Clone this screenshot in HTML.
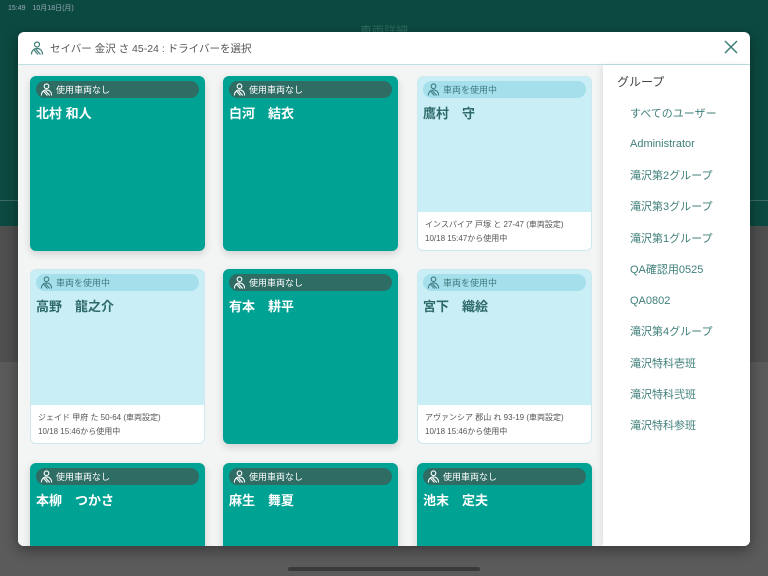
<!DOCTYPE html>
<html><head><meta charset="utf-8"><style>
*{box-sizing:border-box;margin:0;padding:0}
html,body{width:768px;height:576px;overflow:hidden}
body{position:relative;font-family:"Liberation Sans","Noto Sans CJK JP",sans-serif;background:#5b5b5b}
.bgtop{position:absolute;left:0;top:0;width:768px;height:226px;background:#0c4a41}
.bgline{position:absolute;left:0;top:200px;width:768px;height:1px;background:#3d6d66}
.map{position:absolute;left:0;top:226px;width:768px;height:136px;background:#4f4f4f}
.st{position:absolute;left:8px;top:3px;font-size:7px;color:#9ab}
.ttl{position:absolute;left:360px;top:22px;font-size:12px;color:#2f6b62}
.home{position:absolute;left:288px;top:567px;width:192px;height:4px;border-radius:2px;background:#3a3a3a}
.modal{position:absolute;left:18px;top:32px;width:732px;height:514px;background:#fff;border-radius:6px;overflow:hidden;box-shadow:0 4px 14px rgba(0,0,0,.4)}
.hdr{height:33px;border-bottom:1px solid #bfe0e0;display:flex;align-items:center;padding-left:12px;font-size:10.5px;color:#555}
.hdr svg{margin-right:6px}
.x{position:absolute;right:12px;top:8px}
.left{position:absolute;left:0;top:33px;width:585px;height:481px;background:#f3f4f4;overflow:hidden}
.side{position:absolute;left:585px;top:33px;width:147px;height:481px;background:#fff;box-shadow:-2px 0 6px rgba(0,0,0,.08)}
.side h3{font-weight:normal;font-size:12px;line-height:16px;color:#444;position:absolute;left:14px;top:9px}
.side div{position:absolute;left:27px;font-size:11px;line-height:14px;height:14px;color:#3f7f7a;white-space:nowrap}
.card{position:absolute;width:175px;height:175px;border-radius:6px;overflow:hidden}
.t{background:#00a294;box-shadow:0 3px 8px rgba(0,0,0,.15)}
.l{background:#c9eef6;border:1px solid #cde9ee}
.pill{position:absolute;left:6px;top:5px;right:6px;height:17px;border-radius:9px;display:flex;align-items:center;padding-left:4px;font-size:9px}
.l .pill{left:5px;top:4px;right:5px}
.t .pill{background:#2e6c64;color:#fff}
.l .pill{background:#a5dfec;color:#3d7c80}
.pill svg{margin-right:3px}
.nm{position:absolute;left:6px;top:30px;font-size:13px;font-weight:bold;line-height:16px}
.l .nm{left:5px;top:29px}
.t .nm{color:#fff}.l .nm{color:#2f6a6a}
.ft{position:absolute;left:0;bottom:0;width:100%;height:38px;background:#fff;padding:6px 0 0 7px;font-size:8px;color:#555;line-height:14px}
</style></head><body>
<div class="bgtop"></div><div class="bgline"></div><div class="map"></div>
<div class="st">15:49　10月18日(月)</div>
<div class="ttl">車両詳細</div>
<div class="home"></div>
<div class="modal">
 <div class="hdr"><svg width="14" height="14" viewBox="0 0 14 14" fill="none" stroke="#3d7d78" stroke-width="1.2"><circle cx="7" cy="3.5" r="2.5"/><path d="M1.5 13.5c0-4 2.5-6 5.5-6s5.5 2 5.5 6M4 9l4 4.5M6 8.5l4.5 5"/></svg>セイバー 金沢 さ 45-24 : ドライバーを選択</div>
 <svg class="x" width="14" height="14" viewBox="0 0 14 14" stroke="#3d7d78" stroke-width="1.5"><path d="M1 1L13 13M13 1L1 13"/></svg>
 <div class="left">
  <div class="card t" style="left:12px;top:11px"><div class="pill">ICON使用車両なし</div><div class="nm">北村 和人</div></div>
  <div class="card t" style="left:205px;top:11px"><div class="pill">ICON使用車両なし</div><div class="nm">白河　結衣</div></div>
  <div class="card l" style="left:399px;top:11px"><div class="pill">ICON車両を使用中</div><div class="nm">鷹村　守</div><div class="ft">インスパイア 戸塚 と 27-47 (車両設定)<br>10/18 15:47から使用中</div></div>
  <div class="card l" style="left:12px;top:204px"><div class="pill">ICON車両を使用中</div><div class="nm">高野　龍之介</div><div class="ft">ジェイド 甲府 た 50-64 (車両設定)<br>10/18 15:46から使用中</div></div>
  <div class="card t" style="left:205px;top:204px"><div class="pill">ICON使用車両なし</div><div class="nm">有本　耕平</div></div>
  <div class="card l" style="left:399px;top:204px"><div class="pill">ICON車両を使用中</div><div class="nm">宮下　織絵</div><div class="ft">アヴァンシア 郡山 れ 93-19 (車両設定)<br>10/18 15:46から使用中</div></div>
  <div class="card t" style="left:12px;top:398px"><div class="pill">ICON使用車両なし</div><div class="nm">本柳　つかさ</div></div>
  <div class="card t" style="left:205px;top:398px"><div class="pill">ICON使用車両なし</div><div class="nm">麻生　舞夏</div></div>
  <div class="card t" style="left:399px;top:398px"><div class="pill">ICON使用車両なし</div><div class="nm">池末　定夫</div></div>
 </div>
 <div class="side"><h3>グループ</h3>
  <div style="top:42px">すべてのユーザー</div>
  <div style="top:72px">Administrator</div>
  <div style="top:104px">滝沢第2グループ</div>
  <div style="top:135px">滝沢第3グループ</div>
  <div style="top:167px">滝沢第1グループ</div>
  <div style="top:198px">QA確認用0525</div>
  <div style="top:229px">QA0802</div>
  <div style="top:260px">滝沢第4グループ</div>
  <div style="top:292px">滝沢特科壱班</div>
  <div style="top:323px">滝沢特科弐班</div>
  <div style="top:354px">滝沢特科参班</div>
 </div>
</div>
<script>
document.querySelectorAll('.pill').forEach(p=>{
 const light=p.parentElement.classList.contains('l');
 const c=light?'#3d7c80':'#fff';
 p.innerHTML=p.innerHTML.replace('ICON','<svg width="13" height="13" viewBox="0 0 14 14" fill="none" stroke="'+c+'" stroke-width="1.2"><circle cx="7" cy="3.5" r="2.5"/><path d="M1.5 13.5c0-4 2.5-6 5.5-6s5.5 2 5.5 6M4 9l4 4.5M6 8.5l4.5 5"/></svg>');
});
</script>
</body></html>
